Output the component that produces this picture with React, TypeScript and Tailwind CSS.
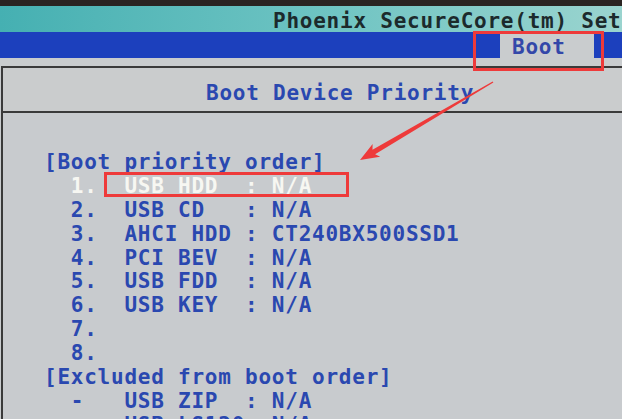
import React from "react";

const rows: { t: string; hi?: boolean }[] = [
  { t: "[Boot priority order]" },
  { t: "  1.  USB HDD  : N/A", hi: true },
  { t: "  2.  USB CD   : N/A" },
  { t: "  3.  AHCI HDD : CT240BX500SSD1" },
  { t: "  4.  PCI BEV  : N/A" },
  { t: "  5.  USB FDD  : N/A" },
  { t: "  6.  USB KEY  : N/A" },
  { t: "  7." },
  { t: "  8." },
  { t: "[Excluded from boot order]" },
  { t: "  -   USB ZIP  : N/A" },
  { t: "  -   USB LS120: N/A" },
];

function Arrow() {
  const tail = [493, 82];
  const tip = [360, 160];
  const dx = tip[0] - tail[0];
  const dy = tip[1] - tail[1];
  const len = Math.hypot(dx, dy);
  const u = [dx / len, dy / len];
  const n = [-u[1], u[0]];
  const headLen = 19;
  const base = [tip[0] - headLen * u[0], tip[1] - headLen * u[1]];
  const p = (b: number[], k: number) => `${b[0] + k * n[0]},${b[1] + k * n[1]}`;
  const neck = [base[0] + 3 * u[0], base[1] + 3 * u[1]];
  const pts = [
    p(tail, 0.7),
    p(neck, 2.6),
    p(base, 7.5),
    `${tip[0]},${tip[1]}`,
    p(base, -7.5),
    p(neck, -2.6),
    p(tail, -0.7),
  ].join(" ");
  return (
    <svg className="absolute left-0 top-0 pointer-events-none" width={622} height={419}>
      <polygon points={pts} fill="#ee3a3a" />
    </svg>
  );
}

export default function App() {
  return (
    <div className="relative w-[622px] h-[419px] overflow-hidden bg-[#c9ccce] font-['DejaVu_Sans_Mono',monospace] font-bold text-[21px] tracking-[0.76px]">
      {/* bezel */}
      <div className="h-[6px] bg-[#2a2422]" />
      {/* title bar */}
      <div className="h-[26px] overflow-hidden bg-linear-to-r from-[#45b0b2] via-[#6cc3c2] to-[#9ad4cf] pl-[273px] pt-[2px] leading-[26px] text-[#1c2a2c] whitespace-nowrap">
        Phoenix SecureCore(tm) Setup Utility
      </div>
      {/* menu bar */}
      <div className="flex h-[26px]">
        <div className="w-[500px] bg-[#1c40bd]" />
        <div className="w-[94px] bg-[#c9ccce] pl-[12px] pt-[4px] leading-[23.9px] text-[#3347a9]">Boot</div>
        <div className="flex-1 bg-[#1c40bd]" />
      </div>
      <div className="h-[8px]" />
      {/* panel */}
      <div className="ml-[1px] border-l-2 border-t-2 border-[#3a3a3a] bg-[#c8cbce]">
        <div className="h-[45px] border-b-2 border-[#3a3a3a] bg-[#cacccd] pl-[203px] pt-[14px] leading-[23.9px] text-[#2a48b0]">
          Boot Device Priority
        </div>
        <div className="pl-[41px] pt-[38px]">
          {rows.map((r, i) => (
            <div
              key={i}
              className={
                "h-[23.9px] leading-[23.9px] whitespace-pre " +
                (r.hi ? "text-[#f7f7f2]" : "text-[#2a48b0]")
              }
            >
              {r.t}
            </div>
          ))}
        </div>
      </div>

      {/* annotations */}
      <div className="absolute left-[473px] top-[31px] w-[131px] h-[40px] border-[3px] border-[#ee3a3a]" />
      <div className="absolute left-[104px] top-[172px] w-[245px] h-[25px] border-[3px] border-[#ee3a3a]" />
      <Arrow />
    </div>
  );
}
